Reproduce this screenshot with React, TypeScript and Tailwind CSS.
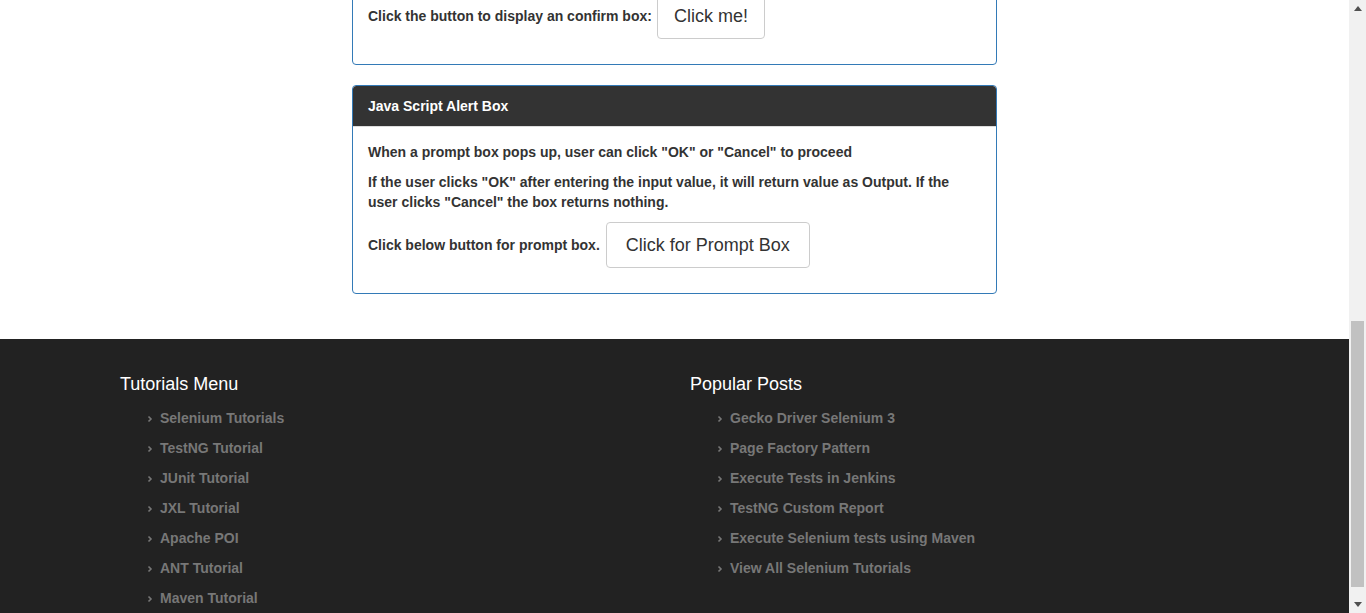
import React from "react";

const font = { fontFamily: '"Liberation Sans", Arial, sans-serif' };

function Chevron() {
  return (
    <svg width="6" height="8" viewBox="0 0 6 8" className="mr-[7px] mt-[2px] shrink-0">
      <polyline points="1.5,1.5 4,4 1.5,6.5" fill="none" stroke="#777" strokeWidth="1.6" />
    </svg>
  );
}

function Item({ label }: { label: string }) {
  return (
    <li className="h-[30px] flex items-center pl-[27px] text-[14px] font-bold text-[#777]">
      <Chevron />
      <span>{label}</span>
    </li>
  );
}

export default function App() {
  const left = [
    "Selenium Tutorials",
    "TestNG Tutorial",
    "JUnit Tutorial",
    "JXL Tutorial",
    "Apache POI",
    "ANT Tutorial",
    "Maven Tutorial",
  ];
  const right = [
    "Gecko Driver Selenium 3",
    "Page Factory Pattern",
    "Execute Tests in Jenkins",
    "TestNG Custom Report",
    "Execute Selenium tests using Maven",
    "View All Selenium Tutorials",
  ];
  return (
    <div className="flex w-[1366px] h-[613px] overflow-hidden bg-white" style={font}>
      <div className="flex-1 flex flex-col overflow-hidden">
        <div className="mt-[-23px] flex flex-col items-center">
          <div className="w-[645px] border border-[#337ab7] rounded-[4px] mb-[20px] overflow-hidden">
            <div className="p-[15px]">
              <div className="flex items-center mb-[10px] text-[14px] font-bold text-[#333]">
                <span>Click the button to display an confirm box:</span>
                <button className="ml-[5px] h-[46px] px-[16px] border border-[#ccc] rounded-[4px] bg-white text-[18px] font-normal text-[#333] leading-[24px]">
                  Click me!
                </button>
              </div>
            </div>
          </div>

          <div className="w-[645px] border border-[#337ab7] rounded-[4px] overflow-hidden">
            <div className="h-[41px] bg-[#333] border-b border-[#ddd] px-[15px] flex items-center text-white text-[14px] font-bold rounded-t-[3px]">
              Java Script Alert Box
            </div>
            <div className="p-[15px] text-[14px] font-bold text-[#333] leading-[20px]">
              <p className="mb-[10px]">When a prompt box pops up, user can click "OK" or "Cancel" to proceed</p>
              <p className="mb-[10px]">
                If the user clicks "OK" after entering the input value, it will return value as Output. If the
                <br />
                user clicks "Cancel" the box returns nothing.
              </p>
              <div className="flex items-center mb-[10px]">
                <span>Click below button for prompt box.</span>
                <button className="ml-[6px] h-[46px] px-[19px] border border-[#ccc] rounded-[4px] bg-white text-[18px] font-normal text-[#333] leading-[24px]">
                  Click for Prompt Box
                </button>
              </div>
            </div>
          </div>
        </div>

        <div className="mt-[45px] flex-1 bg-[#222] pt-[31px] pl-[120px]">
          <div className="flex">
            <div className="w-[570px]">
              <h3 className="h-[28px] leading-[28px] text-[18px] text-white font-normal">Tutorials Menu</h3>
              <ul className="mt-[5px]">
                {left.map((l) => (
                  <Item key={l} label={l} />
                ))}
              </ul>
            </div>
            <div className="w-[570px]">
              <h3 className="h-[28px] leading-[28px] text-[18px] text-white font-normal">Popular Posts</h3>
              <ul className="mt-[5px]">
                {right.map((l) => (
                  <Item key={l} label={l} />
                ))}
              </ul>
            </div>
          </div>
        </div>
      </div>

      <div className="w-[17px] h-[613px] bg-[#f1f1f1] flex flex-col shrink-0">
        <div className="h-[17px] flex items-center justify-center">
          <svg width="8" height="5" viewBox="0 0 8 5">
            <polygon points="0,5 8,5 4,0" fill="#505050" />
          </svg>
        </div>
        <div className="mt-[304px] mx-[2px] h-[266px] bg-[#c1c1c1]" />
        <div className="flex-1" />
        <div className="h-[17px] flex items-center justify-center">
          <svg width="8" height="5" viewBox="0 0 8 5">
            <polygon points="0,0 8,0 4,5" fill="#505050" />
          </svg>
        </div>
      </div>
    </div>
  );
}
